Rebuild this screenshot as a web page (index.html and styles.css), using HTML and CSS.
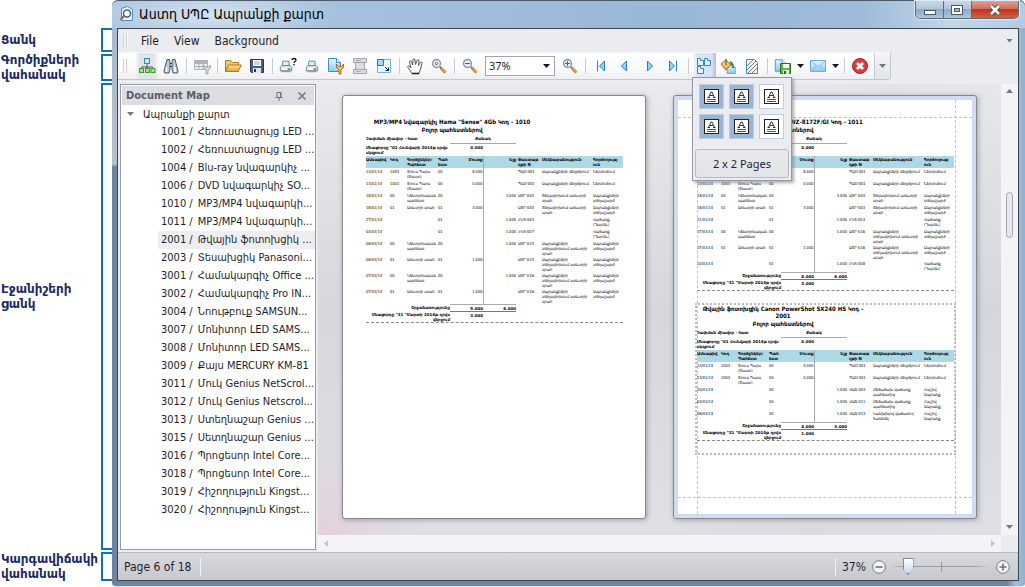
FILE: index.html
```html
<!DOCTYPE html>
<html lang="hy">
<head>
<meta charset="utf-8">
<title>Աստղ ՍՊԸ Ապրանքի քարտ</title>
<link rel="stylesheet" href="styles.css">
</head>
<body>
<svg class="defs" aria-hidden="true">
  <defs>
    <linearGradient id="blue" x1="0" y1="0" x2="0" y2="1"><stop offset="0" stop-color="#e4f6ff"/><stop offset="1" stop-color="#8ccbf3"/></linearGradient>
    <linearGradient id="gold" x1="0" y1="0" x2="0" y2="1"><stop offset="0" stop-color="#fde39a"/><stop offset="1" stop-color="#e8a02c"/></linearGradient>
    <symbol id="lens" viewBox="0 0 16 16">
      <path d="M9 9l2 2" stroke="#5f6b78" stroke-width="2"/>
      <path d="M10.500 10.500l4 4" stroke="#c77a1c" stroke-width="3"/>
      <path d="M10.500 10l4 4" stroke="#ffd36b" stroke-width="1"/>
      <circle cx="5.500" cy="5.500" r="4" fill="#e3f1fa" stroke="#8496a8" stroke-width="1.300"/>
    </symbol>
    <symbol id="sheet" viewBox="0 0 16 16">
      <path d="M1.500 1.500h8l4 4v9h-12z" fill="url(#blue)" stroke="#3f8fcf"/>
      <path d="M9.500 1.500v4h4" fill="#fff" stroke="#3f8fcf"/>
    </symbol>
    <symbol id="printer" viewBox="0 0 16 16">
      <path d="M4.500 2.500h7v6h-8z" fill="#d9efff" stroke="#4b83b5"/>
      <path d="M1.500 9.500l2-2h9l2 2v4h-13z" fill="#e4e6e8" stroke="#6b737c"/>
      <path d="M3 14.500h10" stroke="#7a828b"/>
      <path d="M3 11h6" stroke="#fff" stroke-width="2"/><path d="M10 11.500h3" stroke="#46b233" stroke-width="2"/>
    </symbol>
    <symbol id="glyphpage" viewBox="0 0 15 15">
      <rect x=".5" y=".5" width="14" height="14" fill="#fff" stroke="#222"/>
      <path d="M4.500 8.500L7 3h1l2.500 5.500M6 6.500h3.500M3.500 8.500h2.500M9 8.500h2.500" fill="none" stroke="#333"/>
      <path d="M3 10.500h9M3 12.500h9" stroke="#555"/>
    </symbol>
  </defs>
</svg>

<aside class="notes">
  <div class="note note-menu"><span>Ցանկ</span><i></i></div>
  <div class="note note-tools"><span>Գործիքների վահանակ</span><i></i></div>
  <div class="note note-map"><span>Էջանիշերի ցանկ</span><i></i></div>
  <div class="note note-status"><span>Կարգավիճակի վահանակ</span><i></i></div>
</aside>

<main class="window">
  <header class="titlebar">
    <svg class="app-icon" viewBox="0 0 16 16"><path d="M2.500 2.500l6-2 5 3v11h-11z" fill="#e2f2ff" stroke="#4d8cc6"/><path d="M1.500 14l3.500-4" stroke="#a86a3a" stroke-width="2"/><circle cx="8" cy="7.500" r="3.500" fill="#fff" stroke="#53616f" stroke-width="1.500"/></svg>
    <h1>Աստղ ՍՊԸ Ապրանքի քարտ</h1>
    <div class="captions">
      <button class="cap" aria-label="Minimize"><svg viewBox="0 0 26 18"><rect x="8.500" y="9.500" width="11" height="4" fill="#fff" stroke="#4d5a68"/></svg></button>
      <button class="cap" aria-label="Maximize"><svg viewBox="0 0 26 18"><rect x="7.500" y="4.500" width="11" height="9" fill="#fff" stroke="#4d5a68"/><rect x="10.500" y="7.500" width="5" height="3" fill="#9fb4c8" stroke="#4d5a68"/></svg></button>
      <button class="cap close" aria-label="Close"><svg viewBox="0 0 26 18"><path d="M9 5l8 8M17 5l-8 8" stroke="#4e4040" stroke-width="4.500"/><path d="M9 5l8 8M17 5l-8 8" stroke="#fff" stroke-width="2.600"/></svg></button>
    </div>
  </header>

  <div class="client">
    <nav class="menubar">
      <span class="grip"></span>
      <button>File</button><button>View</button><button>Background</button>
      <span class="menu-more caret gray"></span>
    </nav>

    <div class="toolrow">
      <div class="toolbar">
        <span class="grip"></span>
        <button class="tool on" aria-label="Document Map"><svg viewBox="0 0 18 18"><path d="M9 7v4M3.500 12v-2h11v2M9 10v2" fill="none" stroke="#555"/><rect x="6.500" y="1.500" width="5" height="5" fill="#c9e8ff" stroke="#2f86cf"/><g fill="#a9e08e" stroke="#3f9a31"><rect x="1.500" y="11.500" width="4" height="4"/><rect x="7.500" y="11.500" width="4" height="4"/><rect x="13" y="11.500" width="4" height="4"/></g></svg></button>
        <button class="tool" aria-label="Search"><svg viewBox="0 0 18 18"><g stroke="#4c5867" fill="#b8c9d8"><path d="M5 2.500h2.500l.5 3v6.500l-1 4h-4.500l-.5-2z"/><path d="M13 2.500h-2.500l-.5 3v6.500l1 4h4.500l.5-2z"/></g><path d="M8 6.500h2M8 9.500h2" stroke="#2d3540"/><path d="M4.500 10v5M13 10v5" stroke="#fff" stroke-width="1.500"/></svg></button>
        <span class="sep"></span>
        <button class="tool" disabled aria-label="Customize"><svg viewBox="0 0 18 18"><g stroke="#b0b5bb" fill="#eceef0"><path d="M1.500 3.500h13v9h-13z"/><path d="M1.500 6.500h13M1.500 9.500h13M6 4v8M10 4v8"/></g><path d="M1 3h14v3H1z" fill="#b0b4b9"/><path d="M10.500 8v3l2.500 2v4h2v-4l2.500-2v-3l-2 2h-3z" fill="#d6d9dc" stroke="#a4a9af"/></svg></button>
        <span class="sep"></span>
        <button class="tool" aria-label="Open"><svg viewBox="0 0 18 18"><path d="M1.500 14.500v-11h5l2 2h6v9z" fill="#f6c86b" stroke="#b37a23"/><path d="M1.500 14.500l3-6.500h13l-3.500 6.500z" fill="url(#gold)" stroke="#b37a23"/></svg></button>
        <button class="tool" aria-label="Save"><svg viewBox="0 0 18 18"><path d="M2.500 2.500h13v13h-12l-1-1z" fill="#4a617c" stroke="#283a52"/><path d="M5 3h8v6H5z" fill="#fff"/><path d="M6 5h6M6 7h6" stroke="#9fb1c4"/><path d="M5 11h8v5H5z" fill="#dfe6ee"/><path d="M6 12h2v3H6z" fill="#283a52"/></svg></button>
        <span class="sep"></span>
        <button class="tool" aria-label="Print"><svg viewBox="0 0 18 18"><use href="#printer" x="0" y="2" width="14" height="14"/><path d="M13 3c0-2 4-2 4 0 0 1.500-2 1.500-2 3M15 7v1.500" fill="none" stroke="#111" stroke-width="1.300"/></svg></button>
        <button class="tool" aria-label="Quick Print"><svg viewBox="0 0 18 18"><use href="#printer" x="2" y="2" width="14" height="14"/></svg></button>
        <button class="tool" aria-label="Page Setup"><svg viewBox="0 0 18 18"><use href="#sheet" x="0" y="0" width="16" height="16"/><path d="M9.500 7v3.500l2.500 2v4.500h2v-4.500l2.500-2v-3.500l-2 2.500h-3z" fill="#ffc845" stroke="#b06b12"/></svg></button>
        <button class="tool" disabled aria-label="Header and Footer"><svg viewBox="0 0 18 18"><g fill="#dcdddf" stroke="#a2a5a9"><path d="M4.500 5h9v8h-9z"/><path d="M2.500 1.500h13v4h-13zM2.500 12.500h13v4h-13z"/></g><path d="M5 3.500h5M5 14.500h5" stroke="#aaa"/></svg></button>
        <button class="tool" aria-label="Scale"><svg viewBox="0 0 18 18"><path d="M2.500 2.500h13v13h-13z" fill="#e4f5ff" stroke="#69b5e8"/><path d="M2.500 2.500h6v6h-6z" fill="#a9d9f8" stroke="#2378bd"/><path d="M10 10l4 4M13.500 10.500v3h-3" fill="none" stroke="#222"/></svg></button>
        <span class="sep"></span>
        <button class="tool" aria-label="Hand Tool"><svg viewBox="0 0 18 18"><path d="M6 16.500L2 10.500c-1-2 1-2 2-.5l1 1L3.500 5c0-1.500 2-1.500 2.200 0l1 3L7 3c0-1.500 2-1.500 2 0l.5 4.500L11 3.500c.5-1.500 2-1 2 .5l-.5 4.500 2-3c1-1 2-.2 1.500 1L14.500 12l-1.500 4.500z" fill="#fff" stroke="#555"/><path d="M6 16.500h7" stroke="#222" stroke-width="1.600"/></svg></button>
        <button class="tool" aria-label="Magnifier"><svg viewBox="0 0 18 18"><use href="#lens" x="1" y="1" width="16" height="16"/><circle cx="6.500" cy="6.500" r="1.200" fill="#fff" stroke="#c0392b"/></svg></button>
        <span class="sep"></span>
        <button class="tool" aria-label="Zoom Out"><svg viewBox="0 0 18 18"><use href="#lens" x="1" y="1" width="16" height="16"/><path d="M4 6.500h5" stroke="#c0392b"/></svg></button>
        <label class="combo"><select aria-label="Zoom"><option>37%</option></select><span class="caret"></span></label>
        <button class="tool" aria-label="Zoom In"><svg viewBox="0 0 18 18"><use href="#lens" x="1" y="1" width="16" height="16"/><path d="M4 6.500h5M6.500 4v5" stroke="#c0392b"/></svg></button>
        <span class="sep"></span>
        <button class="tool" aria-label="First Page"><svg viewBox="0 0 18 18"><path d="M5.500 3.500v11" stroke="#1f7fd0"/><path d="M12.500 4v10L7.500 9z" fill="#8fd0ff" stroke="#1f7fd0"/></svg></button>
        <button class="tool" aria-label="Previous Page"><svg viewBox="0 0 18 18"><path d="M10.500 4v10L5.500 9z" fill="#8fd0ff" stroke="#1f7fd0"/></svg></button>
        <button class="tool" aria-label="Next Page"><svg viewBox="0 0 18 18"><path d="M7.500 4v10L12.500 9z" fill="#8fd0ff" stroke="#1f7fd0"/></svg></button>
        <button class="tool" aria-label="Last Page"><svg viewBox="0 0 18 18"><path d="M5.500 4v10L10.500 9z" fill="#8fd0ff" stroke="#1f7fd0"/><path d="M12.500 3.500v11" stroke="#1f7fd0"/></svg></button>
        <span class="sep"></span>
        <div class="drop">
          <button class="tool open" aria-label="Multiple Pages"><svg viewBox="0 0 18 18"><g fill="#e4f4ff" stroke="#3388cc"><path d="M2.500 1.500h3v2h3v5h-6z"/><path d="M9.500 1.500h3v2h3v5h-6z"/><path d="M2.500 9.500h3v2h3v5h-6z"/></g></svg></button>
          <div class="popup">
            <div class="cells">
              <button class="cell sel" aria-label="1 x 1"><svg><use href="#glyphpage"/></svg></button><button class="cell sel" aria-label="1 x 2"><svg><use href="#glyphpage"/></svg></button><button class="cell" aria-label="1 x 3"><svg><use href="#glyphpage"/></svg></button>
              <button class="cell sel" aria-label="2 x 1"><svg><use href="#glyphpage"/></svg></button><button class="cell sel" aria-label="2 x 2"><svg><use href="#glyphpage"/></svg></button><button class="cell" aria-label="2 x 3"><svg><use href="#glyphpage"/></svg></button>
            </div>
            <button class="pages">2 x 2 Pages</button>
          </div>
        </div>
        <button class="tool" aria-label="Page Color"><svg viewBox="0 0 18 18"><use href="#sheet" x="7" y="6" width="11" height="12"/><path d="M2 7l5-4 5 5-5 5z" fill="url(#gold)" stroke="#a56a13"/><path d="M7 2v6" stroke="#444"/><path d="M11 5c2 1 3 2 3 6" fill="none" stroke="#2f8f3a" stroke-width="2"/></svg></button>
        <button class="tool" aria-label="Watermark"><svg viewBox="0 0 18 18"><path d="M3.500 2.500h8l3 3v11h-11z" fill="#f4f4f4" stroke="#3f8fcf"/><path d="M4 9l6-6M4 13l9-9M5 16l9-9M9 16l5-5" stroke="#777"/></svg></button>
        <span class="sep"></span>
        <button class="tool" aria-label="Export"><svg viewBox="0 0 18 18"><use href="#sheet" x="0" y="1" width="14" height="15"/><path d="M6.500 6.500h10v10h-10z" fill="#62b53a" stroke="#28701b"/><path d="M9 7h6v4H9z" fill="#fff"/><path d="M9 13h6v4H9z" fill="#dfeeda"/><path d="M10 14h2v3h-2z" fill="#28701b"/></svg></button>
        <span class="arrow"><span class="caret"></span></span>
        <button class="tool" aria-label="Send"><svg viewBox="0 0 18 18"><path d="M1.500 3.500h15v11h-15z" fill="url(#blue)" stroke="#6aaede"/><path d="M2 4l7 6 7-6M2 14l5-5M16 14l-5-5" fill="none" stroke="#7fbce6"/></svg></button>
        <span class="arrow"><span class="caret"></span></span>
        <span class="sep"></span>
        <button class="tool" aria-label="Exit"><svg viewBox="0 0 18 18"><circle cx="9" cy="9" r="7.500" fill="#dc3b3b" stroke="#a81e22"/><path d="M6 6l6 6M12 6l-6 6" stroke="#fff" stroke-width="2.800"/></svg></button>
        <button class="overflow" aria-label="More"><span class="caret gray"></span></button>
      </div>
    </div>

    <div class="work">
      <section class="docmap">
        <header><h2>Document Map</h2>
          <button aria-label="Pin"><svg viewBox="0 0 10 10"><path d="M3 1.500h4v5H3zM1.500 6.500h7M5 7v3M6.500 2v4" fill="none" stroke="#6f7080"/></svg></button>
          <button aria-label="Close panel"><svg viewBox="0 0 10 10"><path d="M1.500 1.500l7 7M8.500 1.500l-7 7" stroke="#77788a" stroke-width="1.700"/></svg></button>
        </header>
        <p class="root"><span class="caret gray"></span>Ապրանքի քարտ</p>
        <ul>
          <li><b>1001 /</b>Հեռուստացույց LED ...</li>
          <li><b>1002 /</b>Հեռուստացույց LED ...</li>
          <li><b>1004 /</b>Blu-ray նվագարկիչ ...</li>
          <li><b>1006 /</b>DVD նվագարկիչ SO...</li>
          <li><b>1010 /</b>MP3/MP4 նվագարկի...</li>
          <li><b>1011 /</b>MP3/MP4 նվագարկի...</li>
          <li class="current"><b>2001 /</b>Թվային ֆոտոխցիկ ...</li>
          <li><b>2003 /</b>Տեսախցիկ Panasoni...</li>
          <li><b>3001 /</b>Համակարգիչ Office ...</li>
          <li><b>3002 /</b>Համակարգիչ Pro IN...</li>
          <li><b>3004 /</b>Նոութբուք SAMSUN...</li>
          <li><b>3007 /</b>Մոնիտոր LED SAMS...</li>
          <li><b>3008 /</b>Մոնիտոր LED SAMS...</li>
          <li><b>3009 /</b>Քայս MERCURY KM-81</li>
          <li><b>3011 /</b>Մուկ Genius NetScrol...</li>
          <li><b>3012 /</b>Մուկ Genius Netscrol...</li>
          <li><b>3013 /</b>Ստեղնաշար Genius ...</li>
          <li><b>3015 /</b>Սետղնաշար Genius ...</li>
          <li><b>3016 /</b>Պրոցեսոր Intel Core...</li>
          <li><b>3018 /</b>Պրոցեսոր Intel Core...</li>
          <li><b>3019 /</b>Հիշողություն Kingst...</li>
          <li><b>3020 /</b>Հիշողություն Kingst...</li>
        </ul>
      </section>

      <section class="preview">
        <div class="canvas">
          <article class="page">
            <div class="report">
              <h3>MP3/MP4 նվագարկիչ Hama "Sense" 4Gb Կոդ - 1010</h3>
              <h4>Բոլոր պահեստներով</h4>
              <div class="unit"><span>Չափման միավոր - հատ</span><span class="qty">Քանակ</span></div>
              <div class="start"><span>Մնացորդը "01 Հունվարի 2014թ դրվս սկզբում</span><span class="num">0.000</span></div>
              <table>
                <thead><tr><th class="c-date">Ամսաթիվ</th><th class="c-code">Կոդ</th><th class="c-name">Գործընկեր/ Պահեստ</th><th class="c-st">Պահ եստ</th><th class="c-in">Մուտք</th><th class="c-out">Ելք</th><th class="c-doc">Փաստաթ ղթի N</th><th class="c-note">Մեկնաբանություն</th><th>Գործողությ ուն</th></tr></thead>
                <tbody>
                  <tr><td>13/01/14</td><td>1003</td><td>Տոուս Պարս (Բաստ)</td><td>00</td><td>8.000</td><td></td><td>ՊԱՄ-001</td><td>Ապրանքների մեղբերում</td><td>Ներմուծում</td></tr>
                  <tr><td>13/01/14</td><td>1003</td><td>Տոուս Պարս (Բաստ)</td><td>00</td><td>0.000</td><td></td><td>ՊԱՄ-001</td><td>Ապրանքների մեղբերում</td><td>Ներմուծում</td></tr>
                  <tr><td>18/01/14</td><td>00</td><td>Կենտրոնական պահեստ</td><td>00</td><td></td><td>3.000</td><td>ԱՏՐ-003</td><td>Տեղափոխում առևտրի սրահ</td><td>Ապրանքների տեղաշարժ</td></tr>
                  <tr><td>18/01/14</td><td>01</td><td>Առևտրի սրահ</td><td>01</td><td>3.000</td><td></td><td>ԱՏՐ-003</td><td>Տեղափոխում առևտրի սրահ</td><td>Ապրանքների տեղաշարժ</td></tr>
                  <tr><td>27/01/14</td><td></td><td></td><td>01</td><td></td><td>1.000</td><td>ՀԿՏ-003</td><td></td><td>Վաճառք (Դարձև)</td></tr>
                  <tr><td>03/03/14</td><td></td><td></td><td>01</td><td></td><td>1.000</td><td>ՀԿՏ-007</td><td></td><td>Վաճառք (Դարձև)</td></tr>
                  <tr><td>06/03/14</td><td>00</td><td>Կենտրոնական պահեստ</td><td>00</td><td></td><td>1.000</td><td>ԱՏՐ-014</td><td>Ապրանքների տեղափոխում առևտրի սրահ</td><td>Ապրանքների տեղաշարժ</td></tr>
                  <tr><td>06/03/14</td><td>01</td><td>Առևտրի սրահ</td><td>01</td><td>1.000</td><td></td><td>ԱՏՐ-014</td><td>Ապրանքների տեղափոխում առևտրի սրահ</td><td>Ապրանքների տեղաշարժ</td></tr>
                  <tr><td>07/03/14</td><td>00</td><td>Կենտրոնական պահեստ</td><td>00</td><td></td><td>1.000</td><td>ԱՏՐ-016</td><td>Ապրանքների տեղափոխում առևտրի սրահ</td><td>Ապրանքների տեղաշարժ</td></tr>
                  <tr><td>07/03/14</td><td>01</td><td>Առևտրի սրահ</td><td>01</td><td>1.000</td><td></td><td>ԱՏՐ-016</td><td>Ապրանքների տեղափոխում առևտրի սրահ</td><td>Ապրանքների տեղաշարժ</td></tr>
                </tbody>
                <tfoot>
                  <tr><td colspan="4">Շրջանառությունը</td><td class="sum">9.000</td><td class="sum">6.000</td><td colspan="3"></td></tr>
                  <tr><td colspan="4">Մնացորդը "31 "Մարտի 2014թ դրվս վերջում</td><td class="rest">3.000</td><td class="rest"></td><td colspan="3"></td></tr>
                </tfoot>
              </table>
            </div>
          </article>

          <article class="page active">
            <i class="guide top"></i><i class="guide bottom"></i><i class="guide left"></i><i class="guide right"></i>
            <div class="report">
              <h3>MP3/MP4 նվագարկիչ Sony NWZ-8172F/GI Կոդ - 1011</h3>
              <h4>Բոլոր պահեստներով</h4>
              <div class="unit"><span>Չափման միավոր - հատ</span><span class="qty">Քանակ</span></div>
              <div class="start"><span>Մնացորդը "01 Հունվարի 2014թ դրվս սկզբում</span><span class="num">0.000</span></div>
              <table>
                <thead><tr><th class="c-date">Ամսաթիվ</th><th class="c-code">Կոդ</th><th class="c-name">Գործընկեր/ Պահեստ</th><th class="c-st">Պահ եստ</th><th class="c-in">Մուտք</th><th class="c-out">Ելք</th><th class="c-doc">Փաստաթ ղթի N</th><th class="c-note">Մեկնաբանություն</th><th>Գործողությ ուն</th></tr></thead>
                <tbody>
                  <tr><td>13/01/14</td><td>1003</td><td>Տոուս Պարս (Բաստ)</td><td>00</td><td>8.000</td><td></td><td>ՊԱՄ-001</td><td>Ապրանքների մեղբերում</td><td>Ներմուծում</td></tr>
                  <tr><td>13/01/14</td><td>1003</td><td>Տոուս Պարս (Բաստ)</td><td>00</td><td>0.000</td><td></td><td>ՊԱՄ-001</td><td>Ապրանքների մեղբերում</td><td>Ներմուծում</td></tr>
                  <tr><td>18/01/14</td><td>00</td><td>Կենտրոնական պահեստ</td><td>00</td><td></td><td>3.000</td><td>ԱՏՐ-003</td><td>Տեղափոխում առևտրի սրահ</td><td>Ապրանքների տեղաշարժ</td></tr>
                  <tr><td>18/01/14</td><td>01</td><td>Առևտրի սրահ</td><td>01</td><td>3.000</td><td></td><td>ԱՏՐ-003</td><td>Տեղափոխում առևտրի սրահ</td><td>Ապրանքների տեղաշարժ</td></tr>
                  <tr><td>21/01/14</td><td></td><td></td><td>01</td><td></td><td>1.000</td><td>ՀԿՏ-003</td><td></td><td>Վաճառք (Դարձև)</td></tr>
                  <tr><td>07/03/14</td><td>00</td><td>Կենտրոնական պահեստ</td><td>00</td><td></td><td>1.000</td><td>ԱՏՐ-016</td><td>Ապրանքների տեղափոխում առևտրի սրահ</td><td>Ապրանքների տեղաշարժ</td></tr>
                  <tr><td>07/03/14</td><td>01</td><td>Առևտրի սրահ</td><td>01</td><td>1.000</td><td></td><td>ԱՏՐ-016</td><td>Ապրանքների տեղափոխում առևտրի սրահ</td><td>Ապրանքների տեղաշարժ</td></tr>
                  <tr><td>10/03/14</td><td></td><td></td><td>01</td><td></td><td>1.000</td><td>ՀԿՏ-008</td><td></td><td>Վաճառք (Դարձև)</td></tr>
                </tbody>
                <tfoot>
                  <tr><td colspan="4">Շրջանառությունը</td><td class="sum">8.000</td><td class="sum">6.000</td><td colspan="3"></td></tr>
                  <tr><td colspan="4">Մնացորդը "31 "Մարտի 2014թ դրվս վերջում</td><td class="rest">3.000</td><td class="rest"></td><td colspan="3"></td></tr>
                </tfoot>
              </table>
            </div>
            <div class="report picked">
              <h3>Թվային ֆոտոխցիկ Canon PowerShot SX240 HS Կոդ - 2001</h3>
              <h4>Բոլոր պահեստներով</h4>
              <div class="unit"><span>Չափման միավոր - հատ</span><span class="qty">Քանակ</span></div>
              <div class="start"><span>Մնացորդը "01 Հունվարի 2014թ դրվս սկզբում</span><span class="num">0.000</span></div>
              <table>
                <thead><tr><th class="c-date">Ամսաթիվ</th><th class="c-code">Կոդ</th><th class="c-name">Գործընկեր/ Պահեստ</th><th class="c-st">Պահ եստ</th><th class="c-in">Մուտք</th><th class="c-out">Ելք</th><th class="c-doc">Փաստաթ ղթի N</th><th class="c-note">Մեկնաբանություն</th><th>Գործողությ ուն</th></tr></thead>
                <tbody>
                  <tr><td>13/01/14</td><td>1003</td><td>Տոուս Պարս (Բաստ)</td><td>00</td><td>4.000</td><td></td><td>ՊԱՄ-001</td><td>Ապրանքների մեղբերում</td><td>Ներմուծում</td></tr>
                  <tr><td>13/01/14</td><td>1003</td><td>Տոուս Պարս (Բաստ)</td><td>00</td><td>0.000</td><td></td><td>ՊԱՄ-001</td><td>Ապրանքների մեղբերում</td><td>Ներմուծում</td></tr>
                  <tr><td>20/01/14</td><td></td><td></td><td>00</td><td></td><td>1.000</td><td>ՎԱՃ-003</td><td>Մեծածախ վաճառք պահեստից</td><td>Հաշիվ Ապրանք</td></tr>
                  <tr><td>03/03/14</td><td></td><td></td><td>00</td><td></td><td>1.000</td><td>ՎԱՃ-011</td><td>Մեծածախ վաճառք պահեստից</td><td>Հաշիվ Ապրանք</td></tr>
                  <tr><td>06/03/14</td><td></td><td></td><td>00</td><td></td><td>1.000</td><td>ՎԱՃ-013</td><td>Կանխիկով վաճառող հանձնել</td><td>Հաշիվ Ապրանք</td></tr>
                </tbody>
                <tfoot>
                  <tr><td colspan="4">Շրջանառությունը</td><td class="sum">4.000</td><td class="sum">3.000</td><td colspan="3"></td></tr>
                  <tr><td colspan="4">Մնացորդը "31 "Մարտի 2014թ դրվս վերջում</td><td class="rest">1.000</td><td class="rest"></td><td colspan="3"></td></tr>
                </tfoot>
              </table>
            </div>
          </article>
        </div>
        <div class="vscroll"><span class="caret up gray"></span><i></i><span class="caret gray"></span></div>
        <div class="hscroll"><span class="side prev"></span><span class="side"></span></div>
      </section>
    </div>

    <footer class="status">
      <span class="pageno">Page 6 of 18</span>
      <label class="zoom" for="zoom">37%</label>
      <button aria-label="Zoom out"><svg viewBox="0 0 14 14"><circle cx="7" cy="7" r="6.300" fill="#f4f4f6" stroke="#777883"/><path d="M3.500 7h7" stroke="#6d6e78" stroke-width="1.600"/></svg></button>
      <input id="zoom" type="range" min="0" max="100" value="13">
      <button aria-label="Zoom in"><svg viewBox="0 0 14 14"><circle cx="7" cy="7" r="6.300" fill="#f4f4f6" stroke="#777883"/><path d="M3.500 7h7M7 3.500v7" stroke="#6d6e78" stroke-width="1.600"/></svg></button>
    </footer>
  </div>
</main>
</body>
</html>
```
FILE: styles.css
```css
* { box-sizing: border-box; }
body {
  margin: 0; min-height: 100vh; display: flex; background: #fff; color: #1e1e2c;
  font: 11px/18px "Noto Sans", "DejaVu Sans Condensed", "DejaVu Sans", sans-serif;
}
button { margin: 0; padding: 0; border: 0; background: none; font: inherit; color: inherit; }
h1, h2, h3, h4, p, ul { margin: 0; padding: 0; font-weight: normal; }
ul { list-style: none; }
svg { display: block; }
.defs { position: absolute; width: 0; height: 0; }

/* Captions on the left with their brackets */
.notes { flex: 0 0 112px; display: flex; flex-direction: column; gap: 2px; padding: 28px 0 6px; }
.note {
  display: grid; grid-template-columns: 1fr 11px; align-items: center;
  color: #1b2a63; font: bold 12px/15px "DejaVu Sans", sans-serif;
}
.note span { padding-left: 1px; margin: -4px 0; }
.note i { align-self: stretch; border: 2px solid #0b71c1; border-right: 0; }
.note-menu { height: 24px; }
.note-tools { height: 27px; }
.note-map { flex: 1; }
.note-map span { padding-bottom: 40px; }
.note-status { height: 29px; }

/* Window frame */
.window {
  flex: 1; min-width: 0; display: flex; flex-direction: column; padding: 0 6px 5px 5px;
  border-bottom: 1px solid #dfe5ec; border-radius: 6px 6px 4px 4px;
  background: linear-gradient(90deg, transparent 98%, #a4bfda 99%, #8fb0cf), linear-gradient(180deg, #a9bbcb 0, #b4bfcb 28%, #6c859d 28.500%, #6c859d 100%);
}
.titlebar {
  display: flex; align-items: flex-start; height: 28px; margin: 0 -6px 0 -5px; padding: 0 6px 0 7px;
  border-top: 1px solid #4d5a69; border-radius: 6px 6px 0 0;
  background: radial-gradient(ellipse 130px 30px at 100px 14px, #d4e2f0, transparent), linear-gradient(90deg, #a9c4de, #a3bfdb 30%, #99b8d6 60%, #9dbbd8 82%, #c3d6e8 92%, #b3cbe1);
}
.app-icon { width: 16px; height: 16px; margin-top: 5px; }
.titlebar h1 { flex: 1; padding-left: 4px; color: #000; font: 14px/26px "DejaVu Sans Condensed", "DejaVu Sans", sans-serif; }
.captions { display: flex; border: 1px solid #5b6b7c; border-top: 0; border-radius: 0 0 5px 5px; overflow: hidden; box-shadow: 0 0 0 1px #dce8f3; }
.cap { width: 28px; height: 17px; border-right: 1px solid #5b6b7c; background: linear-gradient(#c8d8e7, #b0c5d9 48%, #8fabc6 50%, #abc5dd); }
.cap svg { width: 26px; height: 18px; }
.cap.close { width: 46px; border: 0; background: linear-gradient(#e2a193, #d3695a 48%, #bd3420 50%, #d4603e); }
.cap.close svg { margin: 0 auto; }

.client { flex: 1; display: flex; flex-direction: column; border: 1px solid #3a4550; background: #ebecef; }

.grip { width: 6px; height: 14px; background: repeating-linear-gradient(90deg, #cfd1d6 0 1px, #f8f8fa 1px 2px, transparent 2px 3px); }
.caret { display: block; width: 7px; height: 4px; background: #16161e; clip-path: polygon(0 0, 100% 0, 50% 100%); }
.caret.gray { background: #74757f; }
.caret.up { clip-path: polygon(0 100%, 100% 100%, 50% 0); }

.menubar { display: flex; align-items: center; height: 23px; padding: 0 5px; }
.menubar button { margin-right: 15px; }
.menubar .grip { margin-right: 12px; }
.menu-more { margin-left: auto; }
.menubar button, .status { font-size: 12px; font-family: "DejaVu Sans Condensed", "Noto Sans", sans-serif; }

.toolrow { display: flex; height: 32px; }
.toolbar {
  display: flex; align-items: center; height: 28px; padding-left: 5px;
  border: 1px solid #c6c7ce; border-top-color: #f8f8fa; border-left: 0; border-radius: 0 3px 3px 0;
  background: linear-gradient(#fff, #fafafb 60%, #eeeff3);
}
.toolbar .grip { margin-right: 6px; }
.tool { flex: none; display: grid; place-items: center; width: 24px; height: 26px; }
.tool svg { width: 18px; height: 18px; }
.tool.on { background: linear-gradient(90deg, transparent, #e3e4ea 20% 80%, transparent); }
.tool.open { background: linear-gradient(90deg, #fff, #dbe3fa 20% 80%, #b8bed0); }
.sep { flex: none; width: 1px; height: 16px; margin: 0 3px; background: #cbccd3; }
.arrow { width: 11px; display: grid; place-items: center; }
.combo { position: relative; width: 70px; height: 20px; margin: 0 3px; }
.combo select { width: 100%; height: 100%; padding: 0 3px; border: 1px solid #a3a5b5; border-radius: 0; appearance: none; background: #fff; color: inherit; font: inherit; }
.combo .caret { position: absolute; right: 5px; top: 8px; }
.overflow { display: grid; place-items: center; width: 16px; height: 26px; margin-left: 2px; border-left: 1px solid #c6c7ce; background: linear-gradient(#f5f5f8, #e2e3e8); }

/* Page grid menu */
.drop { position: relative; }
.popup {
  position: absolute; z-index: 5; top: 24px; left: 0; width: 100px; padding: 6px 2px 2px;
  border: 1px solid #9698a6; background: #ebecef; box-shadow: 2px 2px 3px #7779;
}
.cells { display: grid; grid-template: repeat(2, 25px) / repeat(3, 25px); gap: 5px; padding: 0 4px; }
.cell { display: grid; place-items: center; border: 1px solid #bfcddd; background: #fff; }
.cell.sel { background: #9ab5d4; }
.cell svg { width: 15px; height: 15px; }
.pages { width: 100%; height: 29px; margin-top: 10px; border: 1px solid #b9bac4; border-radius: 3px; background: linear-gradient(#e8e9ed, #e3e4e8); }

.work { flex: 1; display: flex; min-height: 0; }

/* Document map panel */
.docmap { flex: none; width: 196px; margin: 0 2px 2px; border: 1px solid #9799a8; background: #fff; }
.docmap header { display: flex; align-items: center; height: 19px; margin: 1px 1px 0; padding: 0 7px 0 4px; background: #dcdde1; }
.docmap h2 { flex: 1; color: #5b5c6c; font: bold 11px/18px "DejaVu Sans Condensed", "DejaVu Sans", sans-serif; }
.docmap header button { margin-left: 13px; }
.docmap header svg { width: 10px; height: 10px; }
.root { display: flex; align-items: center; gap: 9px; padding-left: 6px; }
.docmap ul { font-family: "DejaVu Sans Condensed", "DejaVu Sans", sans-serif; }
.docmap li { margin-left: 37px; padding-left: 3px; white-space: pre; }
.docmap b { font-weight: normal; margin-right: 5px; }
.docmap li.current { background: #eeeef1; }

/* Print preview */
.preview { flex: 1; min-width: 0; display: grid; grid-template: 1fr 17px / 1fr 17px; }
.canvas {
  display: flex; align-items: flex-start; gap: 27px; padding: 11px 24px 16px;
  background:
    radial-gradient(ellipse 110px 100px at 0 100%, #e6c6d799, transparent),
    linear-gradient(100deg, transparent 55%, #c9cad033 75%, transparent),
    linear-gradient(#e9eaed, #d6d7dc 50%, #dfe0e6);
}
.page { position: relative; width: 304px; height: 424px; padding: 22px 22px 0 23px; border: 1px solid #85868e; border-radius: 3px; background: #fff; box-shadow: 1px 1px 5px #6668; }
.page.active { box-shadow: inset 0 0 0 4px #d3daf3, 1px 1px 5px #6668; }
.guide { position: absolute; border: 0 dashed #c3c3c3; }
.guide.top { top: 21px; left: 4px; right: 4px; border-top-width: 1px; }
.guide.bottom { bottom: 20px; left: 4px; right: 4px; border-top-width: 1px; }
.guide.left { left: 23px; top: 4px; bottom: 4px; border-left-width: 1px; }
.guide.right { right: 20px; top: 4px; bottom: 4px; border-left-width: 1px; }

.report { color: #000; border-bottom: 1px dashed #888; font: 4px/5px "DejaVu Sans", sans-serif; }
.report h3, .report h4 { width: 172px; text-align: center; font: bold 6px/7px "DejaVu Sans Condensed", "DejaVu Sans", sans-serif; }
.report h4 { line-height: 9px; }
.unit, .start { display: grid; grid-template-columns: 84px 66px; font-weight: bold; }
.unit { line-height: 9px; }
.qty { text-align: center; border-bottom: 1px solid #aaa; }
.start { height: 12px; padding-top: 1px; }
.start .num { width: 33px; text-align: right; }
.report table { width: 100%; table-layout: fixed; border-collapse: collapse; }
.report th { height: 12px; padding: 1px 0 0; vertical-align: top; text-align: left; background: #add8e6; }
.report th:nth-child(5), .report th:nth-child(6) { text-align: right; }
.c-date { width: 24px; }
.c-code { width: 17px; }
.c-name { width: 31px; }
.c-st { width: 12px; }
.c-in, .c-out { width: 33px; }
.c-doc { width: 26px; }
.c-note { width: 51px; }
.report tbody { font-family: "DejaVu Sans Condensed", "DejaVu Sans", sans-serif; }
.report td { padding: 1px 0 0; vertical-align: top; }
.report tbody tr { height: 12px; }
.report th:nth-child(6), .report tbody td:nth-child(6) { border-left: 1px solid #aaa; }
.report tbody td:nth-child(5), .report tbody td:nth-child(6) { text-align: right; }
.report th:nth-child(7), .report tbody td:nth-child(7) { padding-left: 2px; }
.report tfoot td { text-align: right; font-weight: bold; }
.report tfoot td:first-child { padding-left: 4px; }
.report .sum { border-top: 1px solid #aaa; border-bottom: 1px solid #777; }
.report.picked { position: relative; margin-top: 14px; }
.report.picked::after { content: ""; position: absolute; inset: -2px -2px -15px; border: 2px dotted #bbb; }

.vscroll { display: flex; flex-direction: column; align-items: center; padding: 5px 0 6px; background: #f4f4f7; }
.vscroll i { width: 7px; height: 46px; margin: 99px 0 auto; border: 1px solid #a5a6b2; border-radius: 4px; background: #e6e7ee; }
.hscroll { display: flex; justify-content: space-between; align-items: center; padding: 0 6px; background: #f4f4f7; }
.side { width: 4px; height: 7px; background: #c2c3ca; clip-path: polygon(0 0, 100% 50%, 0 100%); }
.side.prev { clip-path: polygon(100% 0, 0 50%, 100% 100%); }

.status { display: flex; align-items: center; height: 28px; padding: 0 8px 0 6px; border-top: 1px solid #b9bac1; background: linear-gradient(#d9dade, #c7c8ce); }
.pageno { padding-right: 9px; border-right: 1px solid #f2f2f4; }
.zoom { margin-left: auto; padding: 0 6px; border-left: 1px solid #f2f2f4; }
.status svg { width: 14px; height: 14px; }
.status input {
  width: 100px; height: 18px; margin: 0 5px; appearance: none;
  background: linear-gradient(#9a9ba5, #9a9ba5) 50px 50% / 1px 10px no-repeat, linear-gradient(90deg, transparent, #9a9ba5 12% 80%, transparent) 0 50% / 100% 1px no-repeat;
}
.status input::-webkit-slider-thumb { appearance: none; width: 11px; height: 17px; background: linear-gradient(#fff, #c9d6f5) 50% 1px / 9px 14px no-repeat, #858795; clip-path: polygon(0 0, 100% 0, 100% 65%, 50% 100%, 0 65%); }
```
